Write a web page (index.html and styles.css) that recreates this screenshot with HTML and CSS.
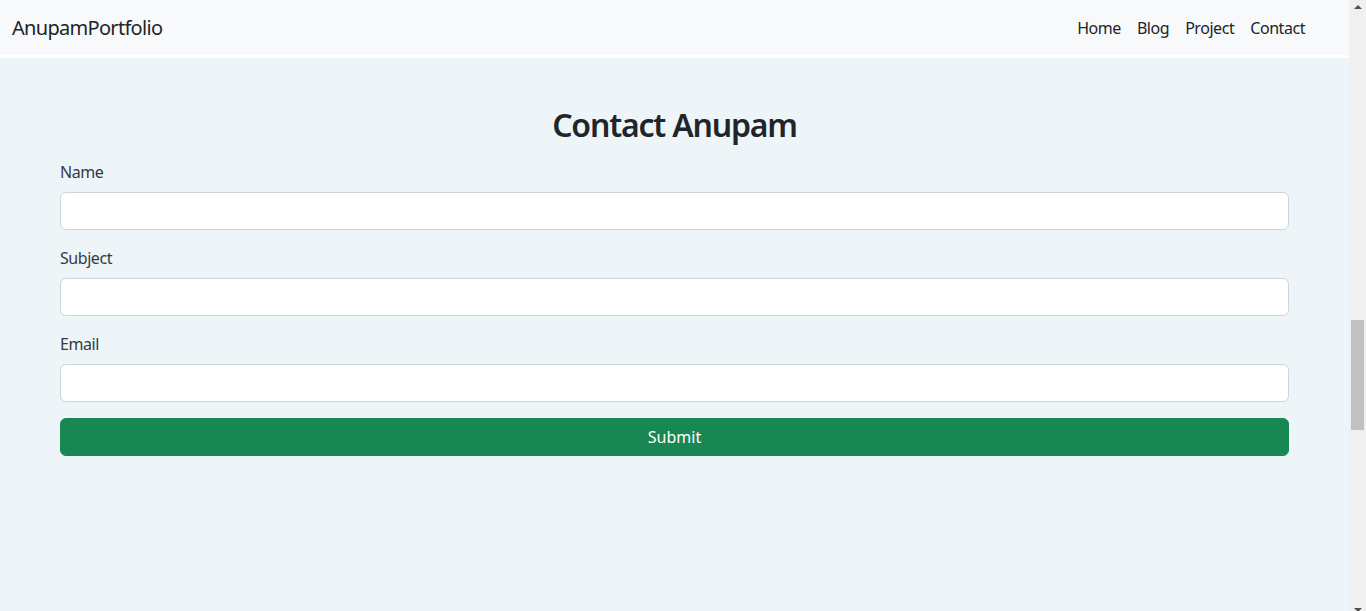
FILE: index.html
```html
<!DOCTYPE html>
<html lang="en">
<head>
<meta charset="utf-8">
<title>Contact Anupam</title>
<link rel="stylesheet" href="styles.css">
</head>
<body>
<div class="page">
  <nav class="navbar">
    <a class="brand" href="#">AnupamPortfolio</a>
    <ul class="nav">
      <li><a class="nav-link" href="#">Home</a></li>
      <li><a class="nav-link" href="#">Blog</a></li>
      <li><a class="nav-link" href="#">Project</a></li>
      <li><a class="nav-link" href="#">Contact</a></li>
    </ul>
  </nav>
  <main class="main">
    <h2 class="title">Contact Anupam</h2>
    <form class="form">
      <div class="field">
        <label class="label" for="name">Name</label>
        <input class="input" id="name" type="text">
      </div>
      <div class="field">
        <label class="label" for="subject">Subject</label>
        <input class="input" id="subject" type="text">
      </div>
      <div class="field">
        <label class="label" for="email">Email</label>
        <input class="input" id="email" type="email">
      </div>
      <button class="btn" type="submit">Submit</button>
    </form>
  </main>
</div>
<div class="scrollbar">
  <div class="sb-arrow sb-up"><span class="tri-up"></span></div>
  <div class="sb-space"></div>
  <div class="sb-thumb"></div>
  <div class="sb-rest"></div>
  <div class="sb-arrow sb-down"><span class="tri-down"></span></div>
</div>
</body>
</html>
```
FILE: styles.css
```css
* { box-sizing: border-box; }
html, body { margin: 0; height: 611px; overflow: hidden; }
body {
  display: flex;
  font-family: "Noto Sans", "Open Sans", sans-serif;
  color: #212529;
  font-size: 16px;
  line-height: 1.5;
  letter-spacing: -0.45px;
}
.page {
  flex: 1;
  display: flex;
  flex-direction: column;
  background: #fff;
}
.navbar {
  height: 58px;
  flex-shrink: 0;
  background: #f8f9fa;
  border-bottom: 3px solid #fff;
  display: flex;
  align-items: center;
  justify-content: space-between;
  padding: 0 36px 0 12px;
}
.brand {
  font-size: 20px;
  letter-spacing: -0.7px;
  color: #212529;
  text-decoration: none;
  line-height: 30px;
}
.nav {
  list-style: none;
  margin: 0;
  padding: 0;
  display: flex;
}
.nav-link {
  display: block;
  padding: 8px;
  color: #212529;
  text-decoration: none;
}
.main {
  flex: 1;
  background: #edf5f8;
  padding: 0 60px;
}
.title {
  margin: 48px 0 16px;
  font-size: 32px;
  font-weight: 600;
  letter-spacing: -1.2px;
  line-height: 1.2;
  text-align: center;
  color: #212529;
}
.field { margin-bottom: 16px; }
.label {
  display: block;
  margin-bottom: 8px;
  color: #343a40;
}
.input {
  display: block;
  width: 100%;
  height: 38px;
  padding: 6px 12px;
  font: inherit;
  background: #fff;
  border: 1px solid #ced4da;
  border-radius: 6px;
}
.btn {
  display: block;
  width: 100%;
  height: 38px;
  font: inherit;
  color: #fff;
  background: #198754;
  border: 1px solid #198754;
  border-radius: 6px;
}
.scrollbar {
  width: 17px;
  flex-shrink: 0;
  background: #f0f0f0;
  display: flex;
  flex-direction: column;
}
.sb-arrow {
  height: 17px;
  flex-shrink: 0;
  display: flex;
  justify-content: center;
  padding-top: 5px;
}
.sb-down { padding-top: 14px; }
.tri-up {
  width: 0; height: 0;
  border-left: 4px solid transparent;
  border-right: 4px solid transparent;
  border-bottom: 4px solid #505050;
}
.tri-down {
  width: 0; height: 0;
  border-left: 4px solid transparent;
  border-right: 4px solid transparent;
  border-top: 4px solid #505050;
}
.sb-space { height: 303px; flex-shrink: 0; }
.sb-thumb {
  height: 110px;
  flex-shrink: 0;
  margin: 0 2px;
  background: #c1c1c1;
}
.sb-rest { flex: 1; }
```
